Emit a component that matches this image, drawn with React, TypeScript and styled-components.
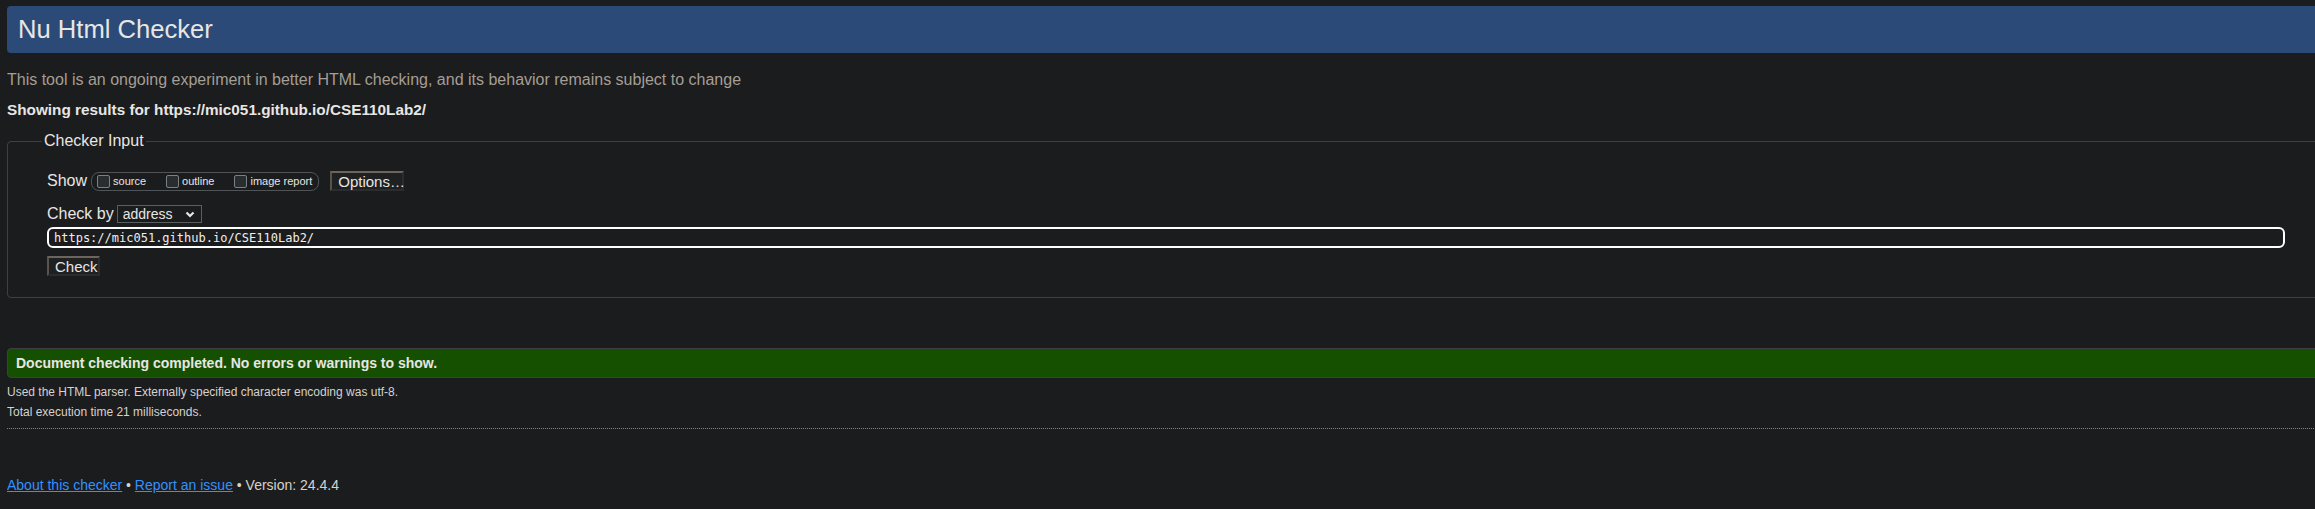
import React from "react";
import styled, { createGlobalStyle } from "styled-components";

const GlobalStyle = createGlobalStyle`
  html, body {
    margin: 0;
    padding: 0;
    background: #1b1c1e;
    overflow: hidden;
  }
  body {
    font-family: "Liberation Sans", Arial, sans-serif;
    color: #e8e6e3;
  }
`;

const Page = styled.div`
  width: 2340px;
  padding: 6px 0 0 7px;
  box-sizing: border-box;
`;

const Header = styled.h1`
  margin: 0;
  height: 47px;
  display: flex;
  align-items: center;
  padding-left: 11px;
  background: #2c4a77;
  border-radius: 4px 0 0 4px;
  font-size: 25.6px;
  font-weight: normal;
  color: #e8e6e3;
`;

const Intro = styled.p`
  margin: 18px 0 0;
  font-size: 16px;
  line-height: 18px;
  color: #a59e94;
`;

const Results = styled.p`
  margin: 12px 0 0;
  font-size: 15.3px;
  line-height: 18px;
  font-weight: bold;
  color: #e8e6e3;
`;

const Fieldset = styled.fieldset`
  margin: 13px 0 0;
  padding: 21px 0 21px 39px;
  border: 1px solid #3e4144;
  border-radius: 4px;
  min-inline-size: 0;
`;

const Legend = styled.legend`
  margin-left: -5px;
  padding: 0 2px;
  font-size: 16px;
  line-height: 18px;
  color: #e8e6e3;
`;

const Row = styled.div<{ $gap?: number; $top?: number }>`
  display: flex;
  align-items: center;
  gap: ${(p) => p.$gap ?? 4}px;
  margin-top: ${(p) => p.$top ?? 0}px;
`;

const Label = styled.span`
  font-size: 16px;
  line-height: 20px;
  color: #e8e6e3;
`;

const Pill = styled.div`
  display: flex;
  align-items: center;
  gap: 20px;
  height: 19px;
  padding: 0 6px 0 5px;
  border: 1px solid #505457;
  border-radius: 8px;
  box-sizing: border-box;
`;

const Option = styled.label`
  display: flex;
  align-items: center;
  gap: 3px;
  font-size: 11px;
  color: #e8e6e3;
`;

const Box = styled.input`
  appearance: none;
  margin: 0;
  width: 13px;
  height: 13px;
  border: 1px solid #7b8086;
  border-radius: 2px;
  background: #2a2d30;
`;

const Button = styled.button<{ $w: number }>`
  width: ${(p) => p.$w}px;
  height: 20px;
  padding: 0 0 0 6px;
  text-align: left;
  font-family: "Liberation Sans", Arial, sans-serif;
  font-size: 15px;
  color: #e8e6e3;
  background: #1e2022;
  border-style: solid;
  border-width: 2px;
  border-color: #6d655c #2a2c2e #2a2c2e #5a534b;
`;

const Select = styled.div`
  display: flex;
  align-items: center;
  justify-content: space-between;
  width: 85px;
  height: 18px;
  padding: 0 6px 0 5px;
  box-sizing: border-box;
  border: 1px solid #5b5e60;
  font-size: 14px;
  color: #e8e6e3;
`;

const UrlInput = styled.input`
  display: block;
  margin-top: 3px;
  width: 2238px;
  height: 21px;
  box-sizing: border-box;
  padding: 0 0 0 5px;
  border: 2px solid #ffffff;
  border-radius: 6px;
  background: #1b1c1e;
  font-family: "DejaVu Sans Mono", "Liberation Mono", monospace;
  font-size: 12px;
  color: #f0eeeb;
  outline: none;
`;

const Success = styled.div`
  margin-top: 50px;
  height: 30px;
  display: flex;
  align-items: center;
  padding-left: 8px;
  box-sizing: border-box;
  background: #154f00;
  border: 1px solid #3d4043;
  border-radius: 4px 0 0 4px;
  font-size: 14px;
  font-weight: bold;
  color: #e8e6e3;
`;

const Note = styled.p<{ $top: number }>`
  margin: ${(p) => p.$top}px 0 0;
  font-size: 12px;
  line-height: 20px;
  color: #d6d2cc;
`;

const Rule = styled.hr`
  margin: 6px 0 0;
  border: 0;
  border-top: 1px dotted #8a8074;
`;

const Footer = styled.p`
  margin: 47px 0 0;
  font-size: 14px;
  line-height: 18px;
  color: #d6d2cc;
`;

const Link = styled.a`
  color: #3391ff;
  text-decoration: underline;
`;

const Chevron = () => (
  <svg width="10" height="7" viewBox="0 0 10 7">
    <polyline points="1.5,1.5 5,5 8.5,1.5" fill="none" stroke="#e8e6e3" strokeWidth="2.2" />
  </svg>
);

export default function App() {
  const url = "https://mic051.github.io/CSE110Lab2/";
  return (
    <Page>
      <GlobalStyle />
      <Header>Nu Html Checker</Header>
      <Intro>
        This tool is an ongoing experiment in better HTML checking, and its behavior remains subject to change
      </Intro>
      <Results>Showing results for {url}</Results>
      <Fieldset>
        <Legend>Checker Input</Legend>
        <Row $gap={4}>
          <Label>Show</Label>
          <Pill>
            <Option><Box type="checkbox" />source</Option>
            <Option><Box type="checkbox" />outline</Option>
            <Option><Box type="checkbox" />image report</Option>
          </Pill>
          <Button $w={74} style={{ marginLeft: 7 }}>Options…</Button>
        </Row>
        <Row $gap={3} $top={13}>
          <Label>Check by</Label>
          <Select>
            address
            <Chevron />
          </Select>
        </Row>
        <UrlInput defaultValue={url} />
        <Row $top={8}>
          <Button $w={53}>Check</Button>
        </Row>
      </Fieldset>
      <Success>Document checking completed. No errors or warnings to show.</Success>
      <Note $top={4}>Used the HTML parser. Externally specified character encoding was utf-8.</Note>
      <Note $top={0}>Total execution time 21 milliseconds.</Note>
      <Rule />
      <Footer>
        <Link href="#">About this checker</Link> • <Link href="#">Report an issue</Link> • Version: 24.4.4
      </Footer>
    </Page>
  );
}
